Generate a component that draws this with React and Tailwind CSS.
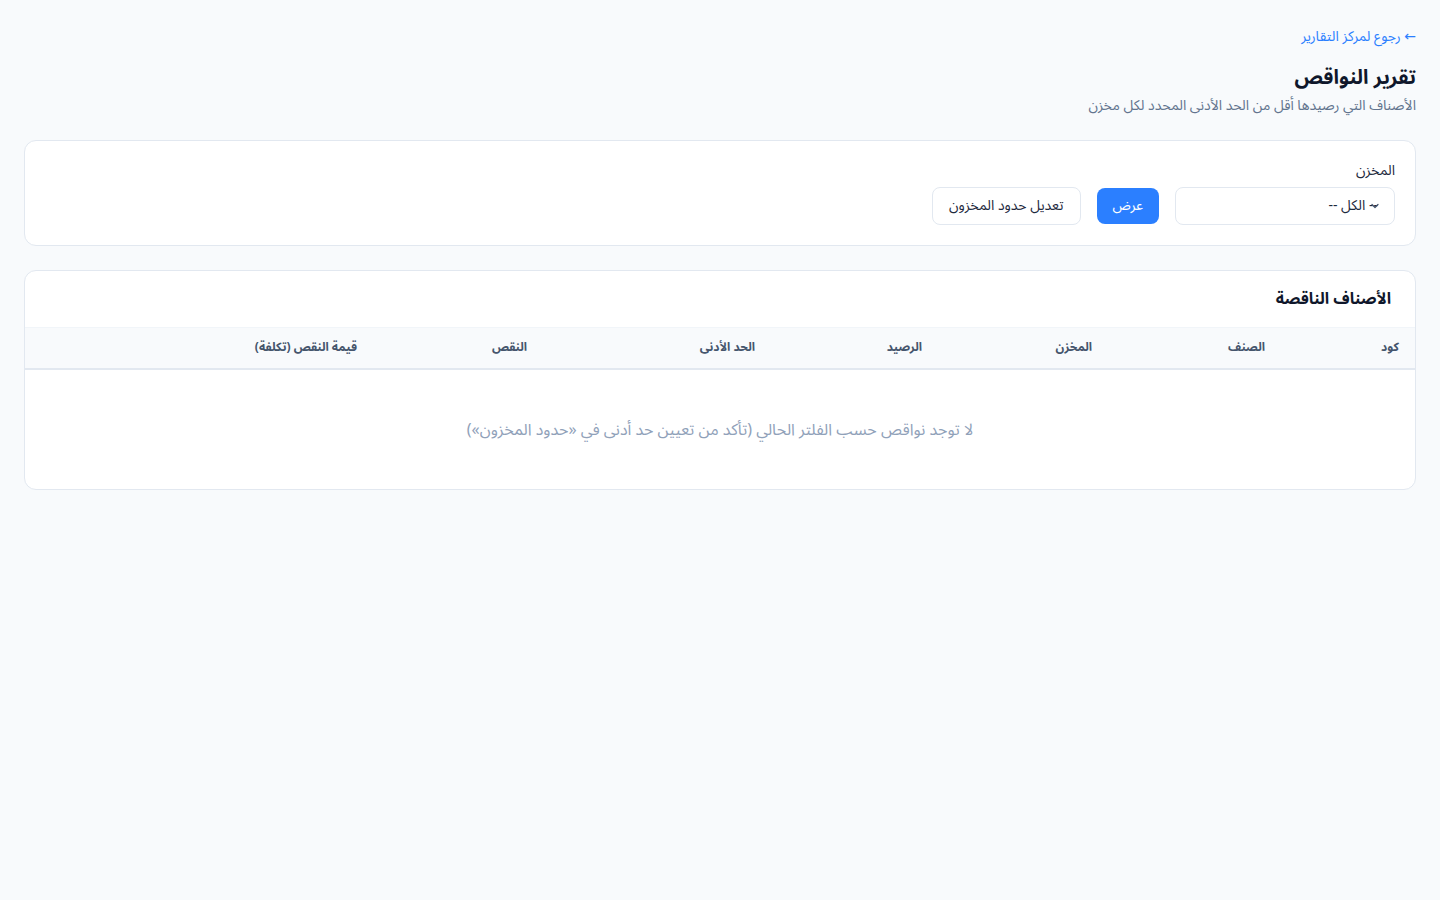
import { ChevronDown } from "lucide-react"

const cols = [
  { label: "كود", w: "w-[134px]" },
  { label: "الصنف", w: "w-[173px]" },
  { label: "المخزن", w: "w-[170px]" },
  { label: "الرصيد", w: "w-[167px]" },
  { label: "الحد الأدنى", w: "w-[228px]" },
  { label: "النقص", w: "w-[170px]" },
  { label: "قيمة النقص (تكلفة)", w: "" },
]

const ShortagesReport = () => {
  return (
    <div
      dir="rtl"
      className="min-h-screen bg-[#f8fafc] px-6 pt-[27px] text-slate-800"
      style={{ fontFamily: '"Noto Sans Arabic", "Noto Sans", "DejaVu Sans", sans-serif' }}
    >
      {/* رأس الصفحة */}
      <a href="#" className="block text-sm text-blue-500 leading-5 hover:underline">
        ← رجوع لمركز التقارير
      </a>
      <h1 className="mt-[17px] text-xl font-bold text-slate-900 leading-7">تقرير النواقص</h1>
      <p className="mt-[2px] text-sm text-slate-500 leading-6">الأصناف التي رصيدها أقل من الحد الأدنى المحدد لكل مخزن</p>

      {/* الفلاتر */}
      <div className="mt-[22px] rounded-xl border border-slate-200 bg-white px-5 pt-[20px] pb-5">
        <label className="block text-sm text-slate-800 leading-5">المخزن</label>
        <div className="mt-[6px] flex items-center gap-4">
          <div className="relative w-[220px]">
            <select className="h-[38px] w-full appearance-none rounded-lg border border-slate-200 bg-white pr-4 pl-3 text-sm text-slate-800 outline-none">
              <option>-- الكل --</option>
            </select>
            <ChevronDown size={12} strokeWidth={2.5} className="pointer-events-none absolute right-[14px] top-1/2 -translate-y-1/2 text-slate-600" />
          </div>
          <button className="h-9 rounded-lg bg-blue-500 px-4 text-sm text-white hover:bg-blue-600">عرض</button>
          <button className="h-[38px] rounded-lg border border-slate-200 bg-white px-4 text-sm text-slate-800 hover:bg-slate-50">
            تعديل حدود المخزون
          </button>
        </div>
      </div>

      {/* الجدول */}
      <div className="mt-6 overflow-hidden rounded-xl border border-slate-200 bg-white">
        <div className="border-b border-slate-100 px-6 py-4">
          <h2 className="text-base font-bold text-slate-900 leading-6">الأصناف الناقصة</h2>
        </div>
        <table className="w-full table-fixed text-sm">
          <thead>
            <tr className="border-b-2 border-slate-200 bg-[#f8fafc]">
              {cols.map((c) => (
                <th key={c.label} className={`${c.w} px-4 py-[12px] text-right text-xs font-bold text-slate-600 leading-4`}>
                  {c.label}
                </th>
              ))}
            </tr>
          </thead>
          <tbody>
            <tr>
              <td colSpan={7} className="h-[120px] text-center text-base text-slate-400">
                لا توجد نواقص حسب الفلتر الحالي (تأكد من تعيين حد أدنى في «حدود المخزون»)
              </td>
            </tr>
          </tbody>
        </table>
      </div>
    </div>
  )
}

export default function App() {
  return <ShortagesReport />
}
